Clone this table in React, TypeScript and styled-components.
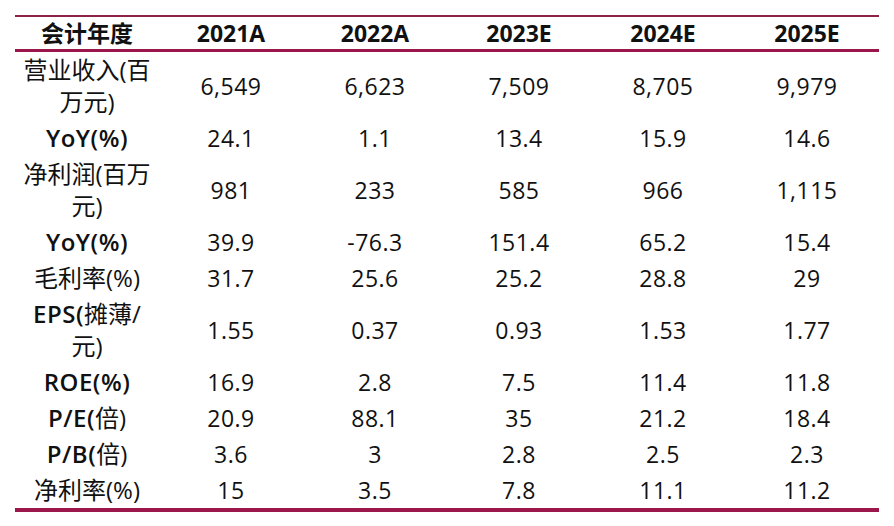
import React from 'react'
import styled, { createGlobalStyle } from 'styled-components'

const GlobalStyle = createGlobalStyle`
  html, body {
    margin: 0;
    padding: 0;
    background: #ffffff;
  }
`

const years = ['2021A', '2022A', '2023E', '2024E', '2025E']

// label lines follow the wrap of the narrow first column
const rows: { label: string[]; values: string[] }[] = [
  { label: ['营业收入(百', '万元)'], values: ['6,549', '6,623', '7,509', '8,705', '9,979'] },
  { label: ['YoY(%)'], values: ['24.1', '1.1', '13.4', '15.9', '14.6'] },
  { label: ['净利润(百万', '元)'], values: ['981', '233', '585', '966', '1,115'] },
  { label: ['YoY(%)'], values: ['39.9', '-76.3', '151.4', '65.2', '15.4'] },
  { label: ['毛利率(%)'], values: ['31.7', '25.6', '25.2', '28.8', '29'] },
  { label: ['EPS(摊薄/', '元)'], values: ['1.55', '0.37', '0.93', '1.53', '1.77'] },
  { label: ['ROE(%)'], values: ['16.9', '2.8', '7.5', '11.4', '11.8'] },
  { label: ['P/E(倍)'], values: ['20.9', '88.1', '35', '21.2', '18.4'] },
  { label: ['P/B(倍)'], values: ['3.6', '3', '2.8', '2.5', '2.3'] },
  { label: ['净利率(%)'], values: ['15', '3.5', '7.8', '11.1', '11.2'] },
]

// latin runs that carry letters are set heavier than the CJK around them
const renderLine = (line: string) =>
  line
    .split(/([\x20-\x7e]+)/)
    .filter(Boolean)
    .map((part, i) =>
      /[A-Za-z]/.test(part) ? <Latin key={i}>{part}</Latin> : <React.Fragment key={i}>{part}</React.Fragment>
    )

const App = (): React.ReactElement => (
  <>
    <GlobalStyle />
    <Page>
      <Table>
        <colgroup>
          {[0, 1, 2, 3, 4, 5].map((i) => (
            <col key={i} style={{ width: 144 }} />
          ))}
        </colgroup>
        <thead>
          <tr>
            <HeadCell>会计年度</HeadCell>
            {years.map((y) => (
              <HeadCell key={y}>{y}</HeadCell>
            ))}
          </tr>
        </thead>
        <tbody>
          {rows.map((row, r) => {
            const last = r === rows.length - 1
            return (
              <tr key={r}>
                <LabelCell $last={last}>
                  {row.label.map((line, i) => (
                    <LabelLine key={i}>{renderLine(line)}</LabelLine>
                  ))}
                </LabelCell>
                {row.values.map((v, c) => (
                  <ValueCell key={c} $last={last}>
                    {v}
                  </ValueCell>
                ))}
              </tr>
            )
          })}
        </tbody>
      </Table>
    </Page>
  </>
)

export default App

const Page = styled.div`
  padding: 15px 0 0 15px;
  font-family: 'Open Sans', 'Noto Sans CJK SC', sans-serif;
  color: #111111;
`
const Table = styled.table`
  width: 864px;
  table-layout: fixed;
  border-collapse: collapse;
  font-size: 23px;
`
const HeadCell = styled.th`
  height: 32px;
  padding: 0;
  text-align: center;
  vertical-align: middle;
  font-weight: 700;
  font-size: 23px;
  line-height: 32px;
  border-top: 2px solid #8e2148;
  border-bottom: 3px solid #9b164a;
`
const Cell = styled.td<{ $last?: boolean }>`
  padding: 2px 4px;
  text-align: center;
  vertical-align: middle;
  line-height: 32px;
  font-weight: 400;
  border-bottom: ${({ $last }) => ($last ? '4px solid #9b164a' : 'none')};
`
const LabelCell = styled(Cell)`
  font-size: 24px;
`
const LabelLine = styled.div`
  white-space: nowrap;
`
const ValueCell = styled(Cell)`
  letter-spacing: 0.5px;
`
const Latin = styled.span`
  font-weight: 600;
  letter-spacing: 0.5px;
`
